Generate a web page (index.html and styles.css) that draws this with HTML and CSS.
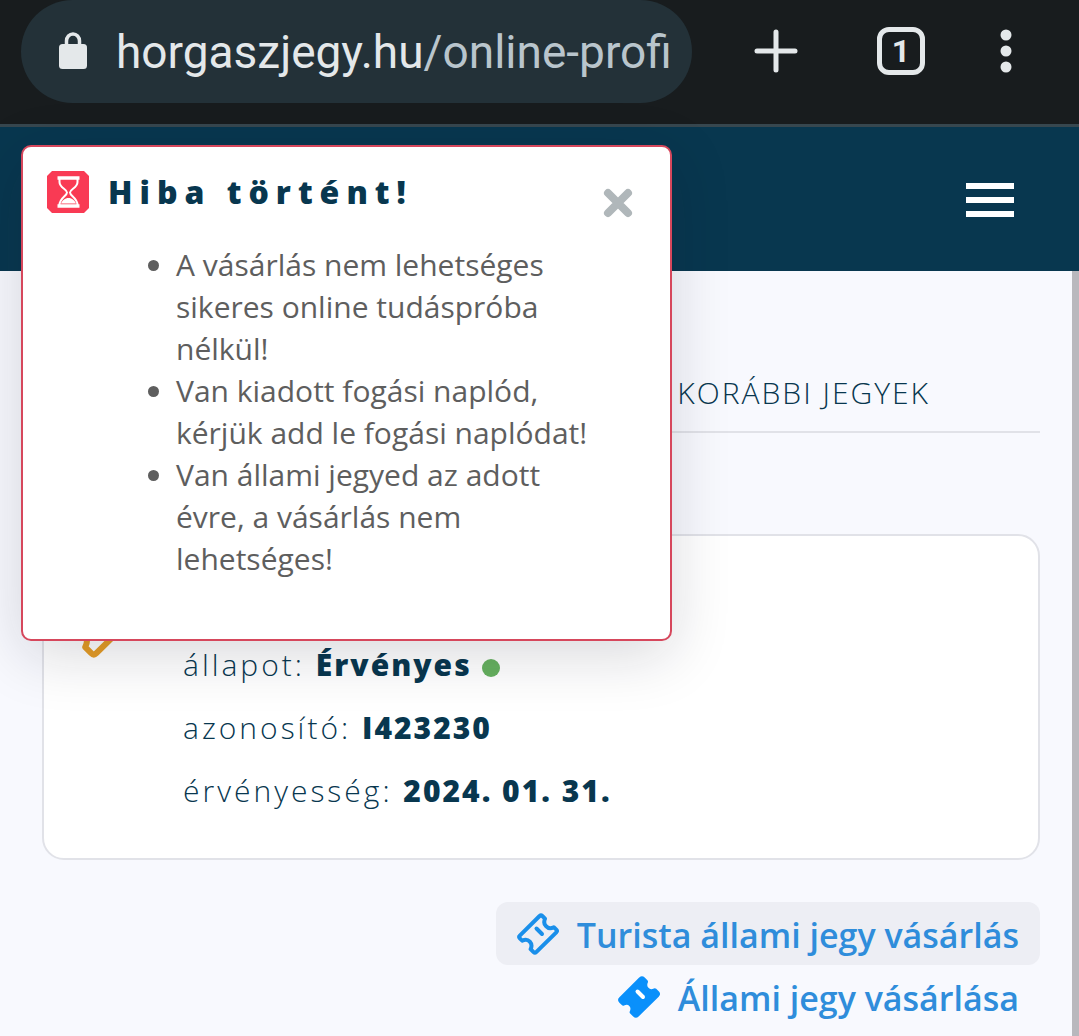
FILE: index.html
```html
<!DOCTYPE html>
<html lang="hu">
<head>
    <meta charset="UTF-8">
    <meta name="viewport" content="width=device-width, initial-scale=1.0">
    <title>Online profil</title>
    <link rel="stylesheet" href="styles.css">
</head>
<body>
    <svg width="0" height="0" class="sprite" aria-hidden="true">
        <symbol id="ticket" viewBox="0 0 42 42">
            <path d="M22.600 3 2.800 22.700q-1.300 1.300 0 2.600l2.400 2.400c3-1.500 6-.8 7.600 1 1.800 2 2.300 4.500.8 7.400l3 3q1.300 1.300 2.600 0L39.300 19.300q1.300-1.300 0-2.600l-2.500-2.500c-3 1.500-6 1-7.800-1-1.800-1.800-2.300-4.500-1-7.500l-2.700-2.700q-1.300-1.300-2.700 0z" stroke-linejoin="round"/>
            <path class="mark" d="m19.500 15.500 5.500 5.500"/>
        </symbol>
    </svg>

    <div class="toolbar">
        <button class="address">
            <svg width="28" height="38" viewBox="0 0 28 38" aria-hidden="true">
                <path d="M8.500 14V8a6.500 7 0 0 1 13 0v6" fill="none" stroke="#e4e8ea" stroke-width="3.500"/>
                <rect x="1" y="11" width="28" height="25" rx="3.500" fill="#e4e8ea"/>
            </svg>
            <span class="url">horgaszjegy.hu<span class="path">/online-profi</span></span>
        </button>
        <button class="tool" aria-label="Új lap">
            <svg width="48" height="48" viewBox="0 0 48 48"><path d="M24 5v38M5 24h38" stroke="#e4e8ea" stroke-width="5" stroke-linecap="round"/></svg>
        </button>
        <button class="tool tabs-count"><span>1</span></button>
        <button class="tool more" aria-label="Menü">
            <svg width="48" height="48" viewBox="0 0 48 48" fill="#e4e8ea"><circle cx="24" cy="8" r="5.500"/><circle cx="24" cy="24" r="5.500"/><circle cx="24" cy="40" r="5.500"/></svg>
        </button>
    </div>

    <header class="site-header">
        <button class="menu" aria-label="Menü"><i></i><i></i><i></i></button>
    </header>

    <main class="content">
        <nav class="tabs">
            <a href="#">KORÁBBI JEGYEK</a>
        </nav>

        <section class="card">
            <svg class="card-icon" width="84" height="84" aria-hidden="true"><use href="#ticket"/></svg>
            <ul class="details">
                <li>állapot: <b>Érvényes</b> <span class="dot"></span></li>
                <li>azonosító: <b>I423230</b></li>
                <li>érvényesség: <b>2024. 01. 31.</b></li>
            </ul>
        </section>

        <div class="actions">
            <a href="#" class="action active">
                <svg width="42" height="42" aria-hidden="true"><use href="#ticket"/></svg>
                <span>Turista állami jegy vásárlás</span>
            </a>
            <a href="#" class="action filled">
                <svg width="42" height="42" aria-hidden="true"><use href="#ticket"/></svg>
                <span>Állami jegy vásárlása</span>
            </a>
        </div>
    </main>

    <div class="toast" role="alert">
        <div class="toast-head">
            <svg width="42" height="42" viewBox="0 0 42 42" aria-hidden="true">
                <path d="M5 0h32l5 5v32l-5 5H5l-5-5V5z" fill="#f93a54"/>
                <g fill="none" stroke="#fff" stroke-width="2">
                    <path d="M12.500 8v3c0 6 7.500 7 7.500 10.500S12.500 27 12.500 34M30.500 8v3c0 6-7.500 7-7.500 10.500S30.500 27 30.500 34"/>
                    <path d="M10.500 7h22M10.500 35h22" stroke-width="3.500"/>
                </g>
                <path d="M14 32.500c1-3 4-5.500 7.500-5.500s6.500 2.500 7.500 5.500z" fill="#fff"/>
            </svg>
            <h2>Hiba történt!</h2>
            <button class="close" aria-label="Bezárás">
                <svg width="30" height="30" viewBox="0 0 30 30"><path d="M5 5l20 20M25 5 5 25" stroke="#b0b7ba" stroke-width="8" stroke-linecap="round"/></svg>
            </button>
        </div>
        <ul class="errors">
            <li>A vásárlás nem lehetséges sikeres online tudáspróba nélkül!</li>
            <li>Van kiadott fogási naplód, kérjük add le fogási naplódat!</li>
            <li>Van állami jegyed az adott évre, a vásárlás nem lehetséges!</li>
        </ul>
    </div>
</body>
</html>
```
FILE: styles.css
```css
:root {
    --navy: #08374f;
    --page: #f8f9fe;
    --line: #e1e2e8;
    --blue: #2f8ddb;
    --light: #e4e8ea;
}
* {
    box-sizing: border-box;
}
body {
    margin: 0;
    min-height: 100vh;
    display: flex;
    flex-direction: column;
    position: relative;
    font-family: "Open Sans", Lato, sans-serif;
    background-color: var(--page);
    color: var(--navy);
}
button {
    padding: 0;
    border: none;
    background: none;
    font-family: inherit;
    cursor: pointer;
}
svg {
    display: block;
    flex-shrink: 0;
}
a {
    color: inherit;
    text-decoration: none;
}
ul {
    margin: 0;
}
.sprite {
    position: absolute;
}

/* browser bar */
.toolbar {
    display: flex;
    align-items: flex-start;
    height: 127px;
    padding: 0 49px 0 21px;
    background-color: #181c1e;
    border-bottom: 3px solid #37474f;
}
.address {
    flex: 1;
    min-width: 0;
    display: flex;
    align-items: center;
    gap: 30px;
    height: 103px;
    margin-right: 60px;
    padding: 0 16px 0 37px;
    border-radius: 52px;
    background-color: #233138;
}
.address svg {
    overflow: visible;
}
.url {
    overflow: hidden;
    white-space: nowrap;
    font-family: Roboto, sans-serif;
    font-size: 46px;
    line-height: 60px;
    color: var(--light);
}
.path {
    color: #b9c5cc;
}
.tool {
    width: 48px;
    height: 48px;
    margin-top: 27px;
}
.tabs-count {
    margin-left: 77px;
    border: 5px solid var(--light);
    border-radius: 12px;
    font-family: Roboto, sans-serif;
    font-size: 32px;
    font-weight: bold;
    line-height: 38px;
    color: var(--light);
}
.more {
    margin-left: 57px;
}

/* site */
.site-header {
    display: flex;
    align-items: center;
    justify-content: flex-end;
    height: 144px;
    padding: 2px 65px 0;
    background-color: var(--navy);
}
.menu {
    display: flex;
    flex-direction: column;
    gap: 8px;
    width: 48px;
}
.menu i {
    height: 6px;
    background-color: #fff;
}
.content {
    flex: 1;
    padding: 80px 32px 8px 42px;
    border-right: 7px solid #b9b8bd;
}
.tabs {
    display: flex;
    justify-content: flex-end;
    padding-right: 110px;
    border-bottom: 2px solid var(--line);
    font-size: 30px;
    font-weight: 300;
    line-height: 40px;
    letter-spacing: 2px;
}
.tabs a {
    padding: 22px 0 18px;
}
.card {
    display: flex;
    gap: 41px;
    margin-top: 101px;
    padding: 97px 20px 36px 14px;
    border: 2px solid var(--line);
    border-radius: 22px;
    background-color: #fff;
}
.card-icon {
    --mark: #e69d26;
    margin-top: -58px;
    fill: none;
    stroke: #e69d26;
    stroke-width: 3px;
}
.details {
    padding: 0;
    list-style: none;
    font-size: 30px;
    font-weight: 300;
    line-height: 63px;
    letter-spacing: 3px;
}
.details b {
    font-weight: 800;
    letter-spacing: 2px;
}
.dot {
    display: inline-block;
    width: 18px;
    height: 18px;
    border-radius: 50%;
    background-color: #66b15f;
    vertical-align: -1px;
}
.actions {
    display: flex;
    flex-direction: column;
    align-items: flex-end;
    margin-top: 42px;
}
.action {
    display: flex;
    align-items: center;
    gap: 18px;
    padding: 0 21px;
    border-radius: 12px;
    font-size: 34px;
    font-weight: 600;
    line-height: 60px;
    color: var(--blue);
}
.action span {
    padding-top: 3px;
}
.action svg {
    fill: none;
    stroke: #1a8fea;
    stroke-width: 4px;
}
.active {
    background-color: #edeef4;
}
.filled {
    --mark: #fff;
}
.filled svg {
    fill: #0a90fb;
    stroke: #0a90fb;
}
.mark {
    stroke: var(--mark, #1a8fea);
    stroke-linecap: round;
}

/* error message */
.toast {
    position: absolute;
    top: 145px;
    left: 21px;
    width: 651px;
    max-width: calc(100% - 42px);
    padding: 24px 37px 59px 24px;
    border: 2px solid #d6475c;
    border-radius: 10px;
    background-color: #fff;
    box-shadow: 0 14px 60px rgba(20, 20, 40, 0.16);
}
.toast-head {
    display: flex;
    align-items: flex-start;
}
.toast h2 {
    flex: 1;
    margin: 0 0 0 19px;
    font-size: 32px;
    font-weight: 800;
    line-height: 42px;
    letter-spacing: 7px;
}
.close {
    margin-top: 17px;
}
.errors {
    margin-top: 26px;
    padding: 0 32px 0 129px;
    font-size: 30px;
    line-height: 42px;
    color: #5e5e5e;
}
```
